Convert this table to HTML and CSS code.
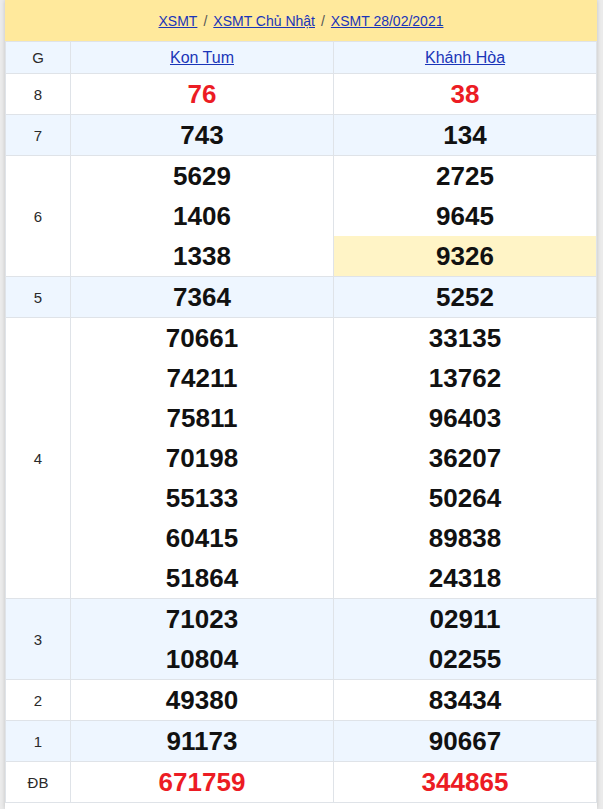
FILE: index.html
```html
<!DOCTYPE html>
<html lang="vi">
<head>
<meta charset="utf-8">
<title>XSMT 28/02/2021</title>
<link rel="stylesheet" href="styles.css">
</head>
<body>
<div class="page">
  <table class="kq">
    <colgroup>
      <col class="c-g">
      <col class="c-p">
      <col class="c-p">
    </colgroup>
    <thead>
      <tr class="crumb-row">
        <th colspan="3">
          <a href="#">XSMT</a><span class="sep">/</span><a href="#">XSMT Chủ Nhật</a><span class="sep">/</span><a href="#">XSMT 28/02/2021</a>
        </th>
      </tr>
      <tr class="head-row alt">
        <th class="lbl">G</th>
        <th><a href="#">Kon Tum</a></th>
        <th><a href="#">Khánh Hòa</a></th>
      </tr>
    </thead>
    <tbody>
      <tr>
        <td class="lbl">8</td>
        <td><div class="n red">76</div></td>
        <td><div class="n red">38</div></td>
      </tr>
      <tr class="alt">
        <td class="lbl">7</td>
        <td><div class="n">743</div></td>
        <td><div class="n">134</div></td>
      </tr>
      <tr>
        <td class="lbl">6</td>
        <td><div class="n">5629</div><div class="n">1406</div><div class="n">1338</div></td>
        <td><div class="n">2725</div><div class="n">9645</div><div class="n hl">9326</div></td>
      </tr>
      <tr class="alt">
        <td class="lbl">5</td>
        <td><div class="n">7364</div></td>
        <td><div class="n">5252</div></td>
      </tr>
      <tr>
        <td class="lbl">4</td>
        <td><div class="n">70661</div><div class="n">74211</div><div class="n">75811</div><div class="n">70198</div><div class="n">55133</div><div class="n">60415</div><div class="n">51864</div></td>
        <td><div class="n">33135</div><div class="n">13762</div><div class="n">96403</div><div class="n">36207</div><div class="n">50264</div><div class="n">89838</div><div class="n">24318</div></td>
      </tr>
      <tr class="alt">
        <td class="lbl">3</td>
        <td><div class="n">71023</div><div class="n">10804</div></td>
        <td><div class="n">02911</div><div class="n">02255</div></td>
      </tr>
      <tr>
        <td class="lbl">2</td>
        <td><div class="n">49380</div></td>
        <td><div class="n">83434</div></td>
      </tr>
      <tr class="alt">
        <td class="lbl">1</td>
        <td><div class="n">91173</div></td>
        <td><div class="n">90667</div></td>
      </tr>
      <tr>
        <td class="lbl">ĐB</td>
        <td><div class="n red">671759</div></td>
        <td><div class="n red">344865</div></td>
      </tr>
    </tbody>
  </table>
</div>
</body>
</html>
```
FILE: styles.css
```css
html, body {
  margin: 0;
  padding: 0;
  background: #ebebeb;
}
body {
  font-family: "Liberation Sans", Arial, sans-serif;
  color: #333;
}
.page {
  margin-left: 5px;
  width: 592px;
  min-height: 809px;
  background: #fff;
  box-shadow: 0 0 4px rgba(0, 0, 0, 0.18);
}
.kq {
  width: 592px;
  border-collapse: collapse;
  table-layout: fixed;
}
.c-g { width: 65px; }
.kq th, .kq td {
  border: 1px solid #dfe3e8;
  padding: 0;
  text-align: center;
  vertical-align: middle;
}
.crumb-row th {
  background: #ffe99c;
  height: 41px;
  font-size: 14px;
  font-weight: normal;
  border-top: none;
  border-left-color: #ffe99c;
  border-right-color: #ffe99c;
}
.crumb-row a {
  color: #1a35b8;
}
.sep {
  color: #555;
  padding: 0 6px;
}
.head-row th {
  height: 31px;
  font-weight: normal;
  font-size: 16px;
}
.head-row a {
  color: #1a35b8;
}
.alt th, .alt td {
  background: #eef6ff;
}
.kq .lbl {
  font-size: 15px;
  color: #2a2a2a;
  font-weight: normal;
}
.n {
  height: 40px;
  line-height: 40px;
  font-size: 26px;
  font-weight: bold;
  color: #111;
}
.n.red {
  color: #ec1c24;
}
.n.hl {
  background: #fff4c6;
}
```
